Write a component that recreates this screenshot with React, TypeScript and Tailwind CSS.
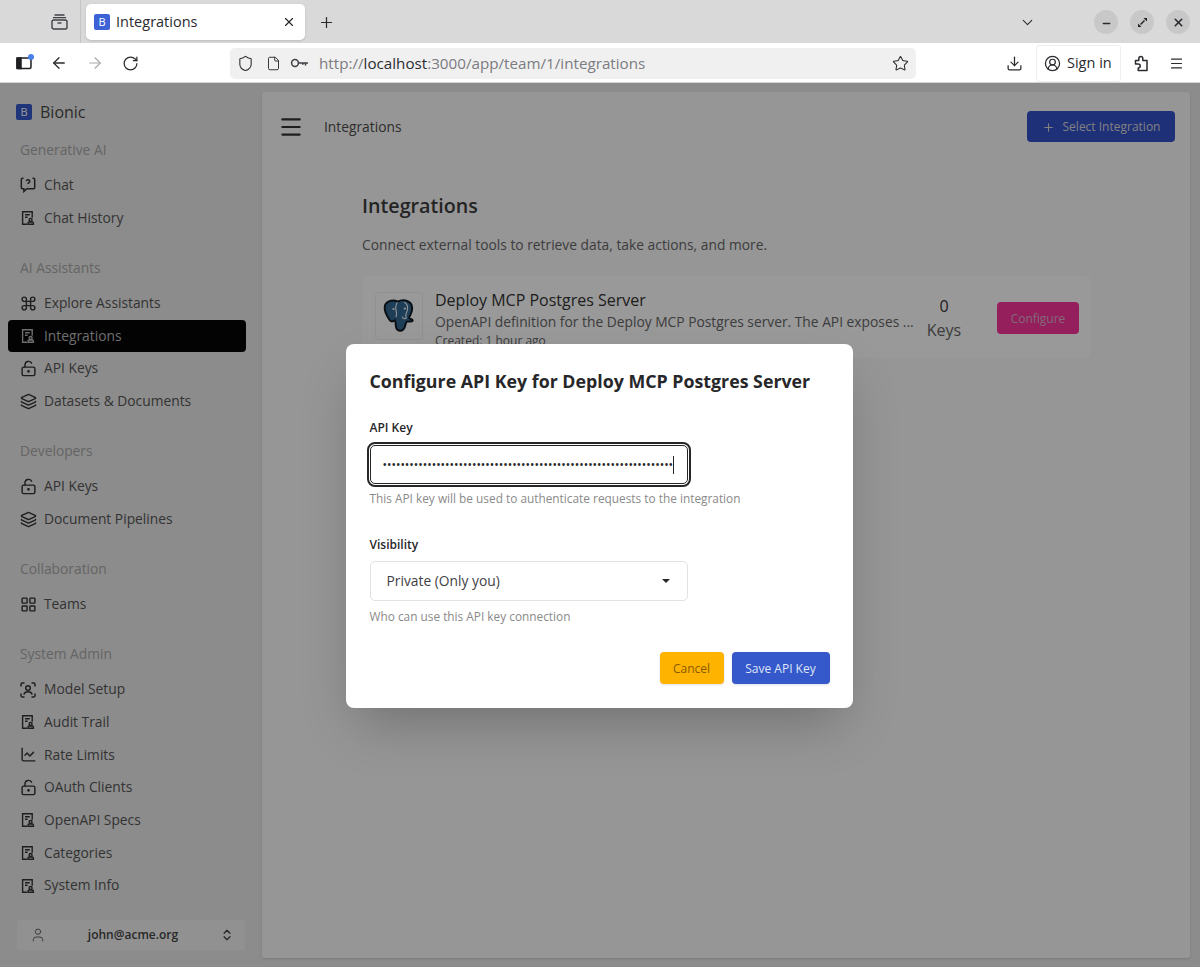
import React from 'react';
import {
  ArrowLeft, ArrowRight, RotateCw, Shield, File, Star, Download, CircleUserRound, Menu, X, Plus,
  ChevronDown, Minus, Command, LockKeyholeOpen, Layers, LayoutGrid, ChartLine, User, ChevronsUpDown,
} from 'lucide-react';

const DocUserIcon = () => (
  <svg width="16" height="16" viewBox="0 0 16 16" fill="none" stroke="currentColor" strokeWidth="1.4" className="shrink-0">
    <path d="M7 14.200H2.600V1.800h9.600v6" />
    <path d="M5 4.800h4.800M5 7.200h2.600" />
    <circle cx="10.600" cy="10" r="1.500" />
    <path d="M8 14.300h5.400v-1.100c0-.7-.6-1.200-1.200-1.200H9.200c-.6 0-1.200.5-1.200 1.200z" />
  </svg>
);

const ChatQuestionIcon = () => (
  <svg width="16" height="16" viewBox="0 0 16 16" fill="none" stroke="currentColor" strokeWidth="1.500" className="shrink-0">
    <path d="M3.500 1.300H2.400c-.6 0-1.100.5-1.100 1.100v8.200c0 .6.500 1.100 1.100 1.100h1.500v2.800l3-2.800h6.700c.6 0 1.100-.5 1.100-1.100V2.400c0-.6-.5-1.100-1.100-1.100h-1.100" />
    <path d="M6.300 4.200c.2-1 1-1.600 1.900-1.500.9.100 1.600.8 1.500 1.700 0 1.300-1.700 1.300-1.700 2.700" />
    <path d="M8 9.400v.4" />
  </svg>
);

const ScanUserIcon = () => (
  <svg width="16" height="16" viewBox="0 0 16 16" fill="none" stroke="currentColor" strokeWidth="1.500" className="shrink-0">
    <path d="M1 4.500V2.600C1 1.700 1.700 1 2.600 1h1.900M11.500 1h1.900c.9 0 1.600.7 1.600 1.600v1.900M1 11.500v1.900c0 .9.700 1.600 1.600 1.600h1.900M11.500 15h1.900c.9 0 1.600-.7 1.600-1.600v-1.900" />
    <circle cx="8" cy="6" r="2.300" />
    <path d="M3.800 12.500c.6-1.800 2.200-2.700 4.200-2.700s3.600.9 4.200 2.700" />
  </svg>
);

const KeyIcon = () => (
  <svg width="20" height="12" viewBox="0 0 20 12" fill="none" stroke="#3f3f46" strokeWidth="1.500">
    <circle cx="5" cy="6" r="3.400" />
    <path d="M8.500 6h9.500M15.500 6v2.500M12.800 6v1.800" />
  </svg>
);

const WindowsIcon = () => (
  <svg width="17" height="16" viewBox="0 0 17 16" fill="none" stroke="#3f3f46" strokeWidth="1.400">
    <path d="M3.500 1h10M2 3.600h13" />
    <rect x="1" y="6" width="15" height="9" rx="1.800" />
    <path d="M6.500 9h4" />
  </svg>
);

const PuzzleIcon = () => (
  <svg width="15" height="17" viewBox="0 0 15 17" fill="none" stroke="#2b2b2f" strokeWidth="1.500" strokeLinejoin="round" className="ml-[13px]">
    <path d="M1.500 5.500h3.300V3.600a2 2 0 0 1 2-2.100c1.200 0 2 .9 2 2.100v1.900h4.200v10H4.200v-2.600c1.200 0 2-.8 2-1.900s-.8-1.900-2-1.900H1.500z" />
  </svg>
);

const SidebarToggle = () => (
  <span className="relative flex">
    <svg width="16" height="14" viewBox="0 0 16 14" fill="none" stroke="#1f1f23" strokeWidth="1.500">
      <rect x="1" y="2" width="14" height="10.500" rx="1.500" />
      <rect x="1" y="2" width="4" height="10.500" fill="#1f1f23" />
    </svg>
    <span className="absolute -top-[2px] -right-[2px] h-[6px] w-[6px] rounded-full bg-[#4a80e8]" />
  </span>
);

const PostgresLogo = () => (
  <svg width="32" height="34" viewBox="0 0 30 32">
    <path
      d="M5 2.500C9 .5 12 1.500 14 2.500c2.500-1.500 6-1.800 9-.5 4 1.800 5 5.500 4 9.500-.6 2.600-2 4.500-2.500 6.500 1 .8 3.400.8 3.400 2-.2 1.400-3 1.400-5 1.100-1.200.2-1.400 1.600-2 3.800-.6 2.600-1.900 5-5 5-3 0-3.800-2.500-4-5.500 0-2-.3-3.500-.8-4.400-2 1.700-3.800 1.600-5.100-.5C4 16.500 2 13 1.600 9.500 1.200 6 2.500 3.700 5 2.500z"
      fill="#336791"
      stroke="#101820"
      strokeWidth="1.800"
    />
    <path d="M13.500 3c-1.800 3-2 6-1 9 .4 1.200.3 3-.4 5M20 3c2.500 1.500 3.500 4 3 7-.4 2-1.500 3-1.600 5.500 0 1 .1 1.700.4 2.500-1.500 1-3.500.6-3.800-1.500" fill="none" stroke="#fff" strokeWidth="1" />
    <circle cx="9.800" cy="9.500" r="1" fill="#fff" />
    <circle cx="20.500" cy="9" r="1" fill="#fff" />
  </svg>
);

type NavItem = { label: string; icon: React.ReactNode; active?: boolean };

const lucideNav = { size: 17, strokeWidth: 2, className: 'shrink-0 -mx-[0.5px]' };

const navGroups: { title: string; items: NavItem[] }[] = [
  {
    title: 'Generative AI',
    items: [
      { label: 'Chat', icon: <ChatQuestionIcon /> },
      { label: 'Chat History', icon: <DocUserIcon /> },
    ],
  },
  {
    title: 'AI Assistants',
    items: [
      { label: 'Explore Assistants', icon: <Command {...lucideNav} /> },
      { label: 'Integrations', icon: <DocUserIcon />, active: true },
      { label: 'API Keys', icon: <LockKeyholeOpen {...lucideNav} /> },
      { label: 'Datasets & Documents', icon: <Layers {...lucideNav} /> },
    ],
  },
  {
    title: 'Developers',
    items: [
      { label: 'API Keys', icon: <LockKeyholeOpen {...lucideNav} /> },
      { label: 'Document Pipelines', icon: <Layers {...lucideNav} /> },
    ],
  },
  {
    title: 'Collaboration',
    items: [{ label: 'Teams', icon: <LayoutGrid {...lucideNav} /> }],
  },
  {
    title: 'System Admin',
    items: [
      { label: 'Model Setup', icon: <ScanUserIcon /> },
      { label: 'Audit Trail', icon: <DocUserIcon /> },
      { label: 'Rate Limits', icon: <ChartLine {...lucideNav} /> },
      { label: 'OAuth Clients', icon: <LockKeyholeOpen {...lucideNav} /> },
      { label: 'OpenAPI Specs', icon: <DocUserIcon /> },
      { label: 'Categories', icon: <DocUserIcon /> },
      { label: 'System Info', icon: <DocUserIcon /> },
    ],
  },
];

function BrowserChrome() {
  return (
    <div className="shrink-0">
      <div className="flex h-[43px] items-center bg-[#d9d9d9] pt-px text-[#2b2b2f]">
        <div className="-mt-px flex h-[43px] w-[81px] items-center justify-end border-r border-[#c4c4c4] pr-[12px]">
          <WindowsIcon />
        </div>
        <div className="ml-[5px] flex h-[36px] w-[219px] items-center rounded-[5px] bg-white pl-[8px] pr-[9px] shadow-sm">
          <span className="flex h-4 w-4 items-center justify-center rounded-[2px] bg-[#3c62d6] text-[11px] text-white">B</span>
          <span className="ml-[6px] flex-1 text-[14.500px]">Integrations</span>
          <X size={14} strokeWidth={2} />
        </div>
        <Plus size={17} strokeWidth={1.75} className="ml-[13px]" />
        <div className="ml-auto flex items-center">
          <ChevronDown size={17} strokeWidth={1.5} className="mr-[58px]" />
          <div className="flex gap-[12px] pr-[10px]">
            <span className="flex h-6 w-6 items-center justify-center rounded-full bg-[#c8c8c8]"><Minus size={11} strokeWidth={3} className="mt-[3px]" /></span>
            <span className="flex h-6 w-6 items-center justify-center rounded-full bg-[#c8c8c8]">
              <svg width="11" height="11" viewBox="0 0 11 11" fill="#222"><path d="M6.500 1H10v3.500zM4.500 10H1V6.500zM7 3l1 1-4 4-1-1z" /></svg>
            </span>
            <span className="flex h-6 w-6 items-center justify-center rounded-full bg-[#c8c8c8]"><X size={13} strokeWidth={3} /></span>
          </div>
        </div>
      </div>
      <div className="flex h-[40px] items-center border-b border-[#d6d6d6] bg-white pt-px text-[#2b2b2f]">
        <div className="ml-[16px]"><SidebarToggle /></div>
        <ArrowLeft size={18} strokeWidth={1.75} className="ml-[18px]" />
        <ArrowRight size={18} strokeWidth={1.5} className="ml-[18px] text-[#a8a8a8]" />
        <RotateCw size={17} strokeWidth={1.75} className="ml-[18px]" />
        <div className="ml-[91px] flex h-[31px] w-[686px] items-center rounded-[5px] bg-[#f0f0f0] pl-[7px] pr-[7px]">
          <Shield size={17} strokeWidth={1.5} />
          <File size={15} strokeWidth={1.5} className="ml-[12px]" />
          <span className="ml-[9px]"><KeyIcon /></span>
          <span className="ml-[9px] flex-1 text-[15.200px] text-[#7b7b80]">
            http://<span className="text-[#2b2b2f]">localhost</span>:3000/app/team/1/integrations
          </span>
          <Star size={17} strokeWidth={1.5} />
        </div>
        <Download size={17} strokeWidth={1.75} className="ml-[90px]" />
        <div className="ml-[13px] flex h-[37px] w-[85px] items-center rounded-[3px] border border-[#eeeeee] pl-[7px]">
          <CircleUserRound size={17} strokeWidth={1.75} />
          <span className="ml-[6px] text-[14.500px]">Sign in</span>
        </div>
        <PuzzleIcon />
        <Menu size={15} strokeWidth={1.75} className="ml-[20px]" />
      </div>
    </div>
  );
}

function Sidebar() {
  return (
    <aside className="flex w-[254px] shrink-0 flex-col pl-[8px] pr-[8px]">
      <div className="mb-[8px] mt-[19px] flex h-[20px] items-center pl-[8px]">
        <span className="flex h-4 w-4 items-center justify-center rounded-[2px] bg-[#3558ca] text-[11px] text-white">B</span>
        <span className="ml-[8px] text-[16px] text-[#4a4a4a]">Bionic</span>
      </div>
      <nav className="mt-[10px] flex flex-col gap-[23.500px]">
        {navGroups.map((group) => (
          <div key={group.title}>
            <div className="mb-[9px] flex h-[20px] items-center pl-[12px] text-[13.800px] font-medium text-[#a8a8a8]">{group.title}</div>
            {group.items.map((item) => (
              <div
                key={item.label}
                className={
                  item.active
                    ? 'flex h-[32.700px] items-center gap-[8px] rounded-[4px] bg-[#060606] pl-[12px] text-[13.800px] text-[#b8b8b8]'
                    : 'flex h-[32.700px] items-center gap-[8px] rounded-[4px] pl-[12px] text-[13.800px] text-[#565656]'
                }
              >
                <span className={item.active ? 'flex text-[#b8b8b8]' : 'flex text-[#333333]'}>{item.icon}</span>
                <span>{item.label}</span>
              </div>
            ))}
          </div>
        ))}
      </nav>
      <div className="mb-[17px] ml-[9px] mr-[1px] mt-auto flex h-[30px] items-center rounded-[3px] bg-[#f2f2f2] pl-[13px] pr-[11px] text-[#444]">
        <User size={16} strokeWidth={1.5} className="text-[#666]" />
        <span className="flex-1 text-center text-[12px] font-semibold">john@acme.org</span>
        <ChevronsUpDown size={14} strokeWidth={2.250} />
      </div>
    </aside>
  );
}

function MainPanel() {
  return (
    <main className="mb-[9px] ml-[8px] mt-[9px] flex w-[928px] flex-col rounded-[3px] bg-[#fbfbfb] shadow-sm">
      <header className="flex items-center pl-[16px] pr-[15px] pt-[19px]">
        <Menu size={26} strokeWidth={2} className="text-[#333]" />
        <span className="ml-[20px] mt-px text-[13.800px] text-[#4c4c4c]">Integrations</span>
        <button className="ml-auto flex h-[31px] w-[148px] items-center justify-center gap-[8px] rounded-[4px] bg-[#3251c8] pt-px text-[12px] font-medium text-[#d8d8d8]">
          <Plus size={13} strokeWidth={2} />
          Select Integration
        </button>
      </header>
      <section className="ml-[100px] mr-[100px] mt-[50px]">
        <h1 className="text-[19.700px] font-semibold leading-[28px] text-[#3c3c3c]">Integrations</h1>
        <p className="mt-[15px] text-[13.800px] leading-[20px] text-[#666]">Connect external tools to retrieve data, take actions, and more.</p>
        <div className="mt-[21px] flex h-[82px] items-start rounded-[4px] bg-white pl-[13px] pr-[11px]">
          <div className="mt-[16px] flex h-[48px] w-[48px] shrink-0 items-center justify-center rounded-[4px] border border-[#f0f0f0]">
            <PostgresLogo />
          </div>
          <div className="ml-[12px] mt-[13px] w-[482px]">
            <div className="text-[16px] font-medium leading-[22px] text-[#333]">Deploy MCP Postgres Server</div>
            <div className="whitespace-nowrap text-[13.800px] leading-[22px] text-[#666]">OpenAPI definition for the Deploy MCP Postgres server. The API exposes ...</div>
            <div className="text-[12px] leading-[16px] text-[#666]">Created: 1 hour ago</div>
          </div>
          <div className="ml-[4px] mt-[18px] flex w-[46px] flex-col items-center text-[16px] leading-[24px]">
            <span className="text-[#333]">0</span>
            <span className="text-[#666]">Keys</span>
          </div>
          <button className="ml-auto mt-[26px] h-[32px] w-[82px] rounded-[4px] bg-[#f9359b] pt-px text-[12px] text-[#d8b0c8]">Configure</button>
        </div>
      </section>
    </main>
  );
}

function ConfigureDialog() {
  return (
    <div className="absolute inset-0 flex items-center justify-center bg-black/40">
      <div className="mr-[2px] mt-[2px] w-[507px] rounded-[8px] bg-white pb-[24px] pl-[24px] pr-[23px] pt-[23px] shadow-2xl">
        <h2 className="text-[17.800px] font-bold leading-[28px] text-[#27272a]">Configure API Key for Deploy MCP Postgres Server</h2>
        <label className="mt-[25px] block text-[12px] font-semibold leading-[16px] text-[#27272a]">API Key</label>
        <div className="mt-[9px] flex h-[39px] w-[318px] items-center rounded-[5px] border-[1px] border-[#27272a] pl-[12px] outline outline-[2px] outline-offset-[1px] outline-[#27272a]">
          <span className="text-[11.900px] text-[#27272a]">{'•'.repeat(65)}</span>
          <span className="h-[18px] w-px bg-[#27272a]" />
        </div>
        <p className="mt-[6px] text-[11.850px] leading-[16px] text-[#8a8a8a]">This API key will be used to authenticate requests to the integration</p>
        <label className="mt-[31px] block text-[12px] font-semibold leading-[16px] text-[#27272a]">Visibility</label>
        <div className="mt-[8px] flex h-[40px] w-[318px] items-center justify-between rounded-[5px] border border-[#e2e2e2] pl-[16px] pr-[17px] text-[13.800px] text-[#3f3f46]">
          <span>Private (Only you)</span>
          <span className="h-0 w-0 border-x-[4px] border-t-[4px] border-x-transparent border-t-[#27272a]" />
        </div>
        <p className="mt-[7px] text-[11.850px] leading-[16px] text-[#8a8a8a]">Who can use this API key connection</p>
        <div className="mt-[28px] flex justify-end gap-[8px]">
          <button className="h-[32px] w-[64px] rounded-[4px] bg-[#fdb300] pt-px text-[12px] font-medium text-[#8a5a00] shadow-sm">Cancel</button>
          <button className="h-[32px] w-[98px] rounded-[4px] bg-[#3558ca] pt-px text-[12px] font-medium text-[#dfe5f8] shadow-sm">Save API Key</button>
        </div>
      </div>
    </div>
  );
}

export default function App() {
  return (
    <div className="flex h-[967px] w-[1200px] flex-col overflow-hidden bg-white" style={{ fontFamily: '"Open Sans", "Noto Sans", sans-serif' }}>
      <BrowserChrome />
      <div className="relative flex flex-1 bg-[#e9e9e9]">
        <Sidebar />
        <MainPanel />
        <ConfigureDialog />
      </div>
    </div>
  );
}
